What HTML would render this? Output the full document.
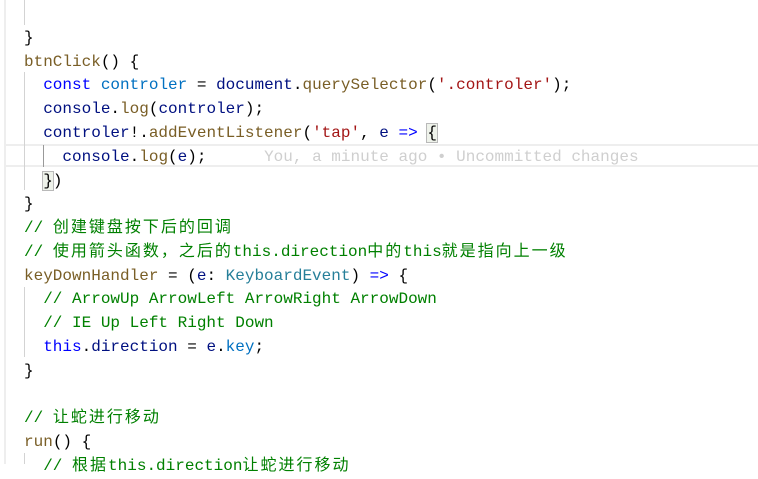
<!DOCTYPE html>
<html><head><meta charset="utf-8"><style>
body{margin:0;width:758px;height:464px;overflow:hidden;background:#fff;position:relative;font-family:"Liberation Mono","Noto Sans CJK SC",monospace;font-size:16px;}
.l{position:absolute;left:24px;height:23.76px;line-height:23.76px;white-space:pre;color:#000;}
.g{position:absolute;width:1px;background:#d3d3d3;}
.c{color:#008000}.k{color:#0000ff}.v{color:#001080}.f{color:#795e26}.s{color:#a31515}.t{color:#267f99}
.b{outline:1px solid #b9b9b9;background:#eef2ea}
.z{letter-spacing:2px}
</style></head><body>
<div style="position:absolute;left:4px;top:0;width:2px;height:464px;background:#eee"></div>
<div style="position:absolute;left:6px;right:0;top:144px;height:23px;border-top:2px solid #eee;border-bottom:2px solid #eee;box-sizing:border-box"></div>
<div class="g" style="left:24px;top:0;height:25px"></div>
<div class="g" style="left:24px;top:72px;height:118px"></div>
<div class="g" style="left:43px;top:145px;height:22px;background:#999"></div>
<div class="g" style="left:24px;top:287px;height:70px"></div>
<div class="g" style="left:24px;top:453px;height:11px"></div>
<div class="l" style="top:27px">}</div>
<div class="l" style="top:51px"><span class="f">btnClick</span>() {</div>
<div class="l" style="top:74px">  <span class="k">const</span> <span class="v" style="color:#0070c1">controler</span> = <span class="v">document</span>.<span class="f">querySelector</span>(<span class="s">'.controler'</span>);</div>
<div class="l" style="top:98px">  <span class="v">console</span>.<span class="f">log</span>(<span class="v">controler</span>);</div>
<div class="l" style="top:122px">  <span class="v">controler</span>!.<span class="f">addEventListener</span>(<span class="s">'tap'</span>, <span class="v">e</span> <span class="k">=&gt;</span> <span class="b">{</span></div>
<div class="l" style="top:146px">    <span class="v">console</span>.<span class="f">log</span>(<span class="v">e</span>);      <span style="color:#cfcfcf">You, a minute ago • Uncommitted changes</span></div>
<div class="l" style="top:170px">  <span class="b">}</span>)</div>
<div class="l" style="top:193px">}</div>
<div class="l c" style="top:217px">// <span class="z">创建键盘按下后的回调</span></div>
<div class="l c" style="top:241px">// <span class="z">使用箭头函数，之后的</span>this.direction<span class="z">中的</span>this<span class="z">就是指向上一级</span></div>
<div class="l" style="top:265px"><span class="f">keyDownHandler</span> = (<span class="v">e</span>: <span class="t">KeyboardEvent</span>) <span class="k">=&gt;</span> {</div>
<div class="l c" style="top:288px">  // ArrowUp ArrowLeft ArrowRight ArrowDown</div>
<div class="l c" style="top:312px">  // IE Up Left Right Down</div>
<div class="l" style="top:336px">  <span class="k">this</span>.<span class="v">direction</span> = <span class="v">e</span>.<span class="v" style="color:#0070c1">key</span>;</div>
<div class="l" style="top:360px">}</div>
<div class="l c" style="top:407px">// <span class="z">让蛇进行移动</span></div>
<div class="l" style="top:431px"><span class="f">run</span>() {</div>
<div class="l c" style="top:455px">  // <span class="z">根据</span>this.direction<span class="z">让蛇进行移动</span></div>
</body></html>
